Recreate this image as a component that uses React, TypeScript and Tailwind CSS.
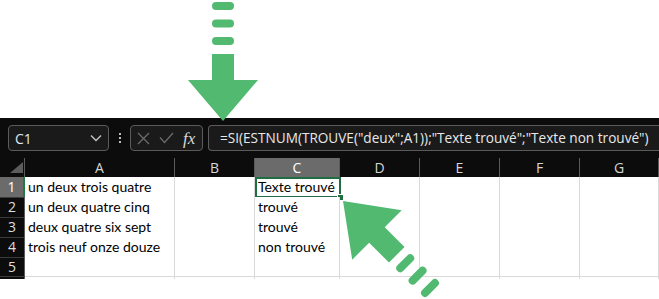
import React from 'react';

const cols = ['A', 'B', 'C', 'D', 'E', 'F', 'G'];

const rows = [
  { n: '1', a: 'un deux trois quatre', c: 'Texte trouvé' },
  { n: '2', a: 'un deux quatre cinq', c: 'trouvé' },
  { n: '3', a: 'deux quatre six sept', c: 'trouvé' },
  { n: '4', a: 'trois neuf onze douze', c: 'non trouvé' },
  { n: '5', a: '', c: '' },
  { n: '', a: '', c: '' },
];

const grid = 'grid grid-cols-[25px_150px_80px_85px_80px_80px_80px_79px]';

function Arrows() {
  // one arrow shape pointing down, tip at 0,0
  const shape = (h: number, s: number, gap: number) => (
    <>
      <polygon points={`0,0 -35,${-h} -11,${-h} -11,${-h - s} 11,${-h - s} 11,${-h} 35,${-h}`} />
      {[0, 1, 2].map((i) => (
        <rect
          key={i}
          x={-11}
          y={-h - s - gap - 8 - i * 17.5}
          width={22}
          height={8}
          rx={4}
        />
      ))}
    </>
  );
  return (
    <svg
      className="absolute left-0 top-0 pointer-events-none"
      width={659}
      height={299}
      viewBox="0 0 659 299"
    >
      <g fill="#52b970">
        <g transform="translate(223,121)">{shape(41, 26, 9)}</g>
        <g transform="translate(343,201) rotate(135)">{shape(48, 28, 8)}</g>
      </g>
    </svg>
  );
}

export default function App() {
  return (
    <div className="relative w-[659px] h-[299px] bg-white overflow-hidden" style={{ fontFamily: '"Open Sans", "Noto Sans", sans-serif' }}>
      <div className="h-[118px]" />
      <div className="h-[161px] bg-[#0c0c0c] overflow-hidden">
        {/* Formula bar */}
        <div className="h-[40px] flex items-center pl-2">
          <div className="shrink-0 w-[101px] h-[26px] rounded-[4px] border border-[#5b5b5b] bg-[#1a1a1a] flex items-center justify-between pl-[6px] pr-[6px] text-[#dfe9f3] text-[14px]">
            <span>C1</span>
            <svg width="12" height="8" viewBox="0 0 12 8" fill="none" stroke="#c8c8c8" strokeWidth="1.3">
              <path d="M1 1.5 L6 6.5 L11 1.5" />
            </svg>
          </div>
          <div className="shrink-0 w-[21px] flex flex-col items-center gap-[2px]">
            <span className="w-[2px] h-[2px] bg-[#bdbdbd]" />
            <span className="w-[2px] h-[2px] bg-[#bdbdbd]" />
            <span className="w-[2px] h-[2px] bg-[#bdbdbd]" />
          </div>
          <div className="shrink-0 w-[73px] h-[26px] rounded-[4px] border border-[#5b5b5b] bg-[#1a1a1a] flex items-center pl-[6px] gap-[9px]">
            <svg width="13" height="13" viewBox="0 0 13 13" fill="none" stroke="#6a6a6a" strokeWidth="1.3">
              <path d="M1 1 L12 12 M12 1 L1 12" />
            </svg>
            <svg width="15" height="12" viewBox="0 0 15 12" fill="none" stroke="#6a6a6a" strokeWidth="1.3">
              <path d="M1 5.5 L5.5 10.5 L14 1" />
            </svg>
            <span className="text-[#d8d8d8] text-[17px] italic leading-none" style={{ fontFamily: '"Liberation Serif", serif' }}>fx</span>
          </div>
          <div className="ml-[5px] min-w-0 flex-1 h-[26px] rounded-l-[4px] border border-r-0 border-[#5b5b5b] bg-[#1a1a1a] flex items-center pl-[11px] text-[#e8e8e8] text-[13.6px] whitespace-nowrap overflow-hidden">
            =SI(ESTNUM(TROUVE("deux";A1));"Texte trouvé";"Texte non trouvé")
          </div>
        </div>

        {/* Column headers */}
        <div className={`${grid} h-[19px] text-[#d6d6d6] text-[14px] leading-[19px]`}>
          <div className="relative border-r border-[#5a5a5a]">
            <svg className="absolute left-[10px] top-[4px]" width="13" height="11" viewBox="0 0 13 11">
              <polygon points="13,0 13,11 0,11" fill="#5c5c5c" />
            </svg>
          </div>
          {cols.map((c) => (
            <div
              key={c}
              className={`text-center border-r border-[#5a5a5a] ${c === 'C' ? 'bg-[#6b6b6b] text-white' : ''}`}
            >
              {c}
            </div>
          ))}
        </div>

        {/* Rows */}
        {rows.map((r, i) => (
          <div key={i} className={`${grid} h-[20px] text-[14px] leading-[20px]`} style={{ fontFamily: 'Lato, "Open Sans", sans-serif' }}>
            <div
              className={`text-center text-[14px] leading-[19px] border-b border-[#3a3a3a] ${
                r.n === '1' ? 'bg-[#6b6b6b] text-white border-r-2 border-r-[#1f7a45]' : 'text-[#dedede] border-r border-r-[#5a5a5a]'
              }`}
              style={{ fontFamily: '"Open Sans", sans-serif' }}
            >
              {r.n}
            </div>
            <div className="bg-white border-r border-b border-[#d9d9d9] pl-[3px] text-black whitespace-nowrap">{r.a}</div>
            <div className="bg-white border-r border-b border-[#d9d9d9]" />
            <div className="relative bg-white border-r border-b border-[#d9d9d9] pl-[3px] text-black whitespace-nowrap">
              {r.c}
              {r.n === '1' && (
                <>
                  <div className="absolute left-0 top-0 w-[86px] h-[21px] border-2 border-[#1f6e43]" />
                  <div className="absolute left-[82px] top-[17px] w-[7px] h-[7px] bg-[#1f6e43] border border-white" />
                </>
              )}
            </div>
            <div className="bg-white border-r border-b border-[#d9d9d9]" />
            <div className="bg-white border-r border-b border-[#d9d9d9]" />
            <div className="bg-white border-r border-b border-[#d9d9d9]" />
            <div className="bg-white border-r border-b border-[#d9d9d9]" />
          </div>
        ))}
      </div>
      <Arrows />
    </div>
  );
}
